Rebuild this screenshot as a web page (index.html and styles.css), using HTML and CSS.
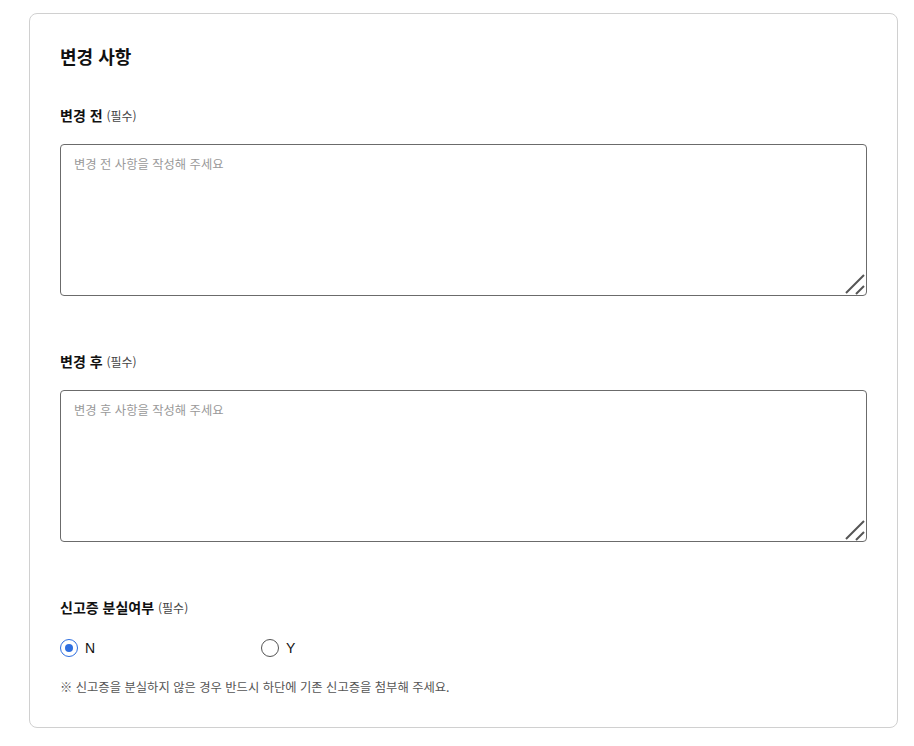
FILE: index.html
```html
<!DOCTYPE html>
<html lang="ko">
<head>
  <meta charset="UTF-8" />
  <meta name="viewport" content="width=device-width, initial-scale=1.0">
  <title>변경 사항</title>
  <link rel="stylesheet" href="styles.css">
</head>
<body>
  <section class="change-card">
    <h2 class="card-title">변경 사항</h2>

    <div class="field">
      <label class="field-label" for="beforeInput">변경 전 <span class="req">(필수)</span></label>
      <div class="text-wrap">
        <textarea id="beforeInput" class="field-text" placeholder="변경 전 사항을 작성해 주세요"></textarea>
        <svg class="grip" width="22" height="22" viewBox="0 0 22 22"><path d="M1 19L19 1M11 20L19 12" /></svg>
      </div>
    </div>

    <div class="field">
      <label class="field-label" for="afterInput">변경 후 <span class="req">(필수)</span></label>
      <div class="text-wrap">
        <textarea id="afterInput" class="field-text" placeholder="변경 후 사항을 작성해 주세요"></textarea>
        <svg class="grip" width="22" height="22" viewBox="0 0 22 22"><path d="M1 19L19 1M11 20L19 12" /></svg>
      </div>
    </div>

    <div class="field field-last">
      <div class="field-label">신고증 분실여부 <span class="req">(필수)</span></div>
      <div class="radio-row">
        <label class="radio-item">
          <input type="radio" name="lost" value="N" checked>
          <span class="radio-mark"></span>
          <span class="radio-text">N</span>
        </label>
        <label class="radio-item">
          <input type="radio" name="lost" value="Y">
          <span class="radio-mark"></span>
          <span class="radio-text">Y</span>
        </label>
      </div>
      <p class="note">※ 신고증을 분실하지 않은 경우 반드시 하단에 기존 신고증을 첨부해 주세요.</p>
    </div>
  </section>
</body>
</html>
```

FILE: styles.css
```css
:root {
  --text-color: #111;
  --muted-color: #555;
  --line-color: #d0d0d0;
  --input-border: #6b6b6b;
  --blue: #2f6fe0;
}
html, body {
  margin: 0;
  padding: 0;
  background: #fff;
  color: var(--text-color);
  font-family: "Noto Sans CJK KR", "Noto Sans", sans-serif;
}
body {
  padding: 13px 15px 18px 29px;
}
.change-card {
  border: 1px solid var(--line-color);
  border-radius: 8px;
  padding: 29px 30px 31px 30px;
  max-width: 807px;
}
.card-title {
  margin: 0;
  font-size: 18px;
  font-weight: 700;
  line-height: 26px;
}
.field {
  margin-top: 36px;
}
.field + .field {
  margin-top: 55px;
}
.field-label {
  display: block;
  font-size: 14px;
  font-weight: 700;
  line-height: 20px;
  margin-bottom: 19px;
}
.req {
  font-weight: 400;
  font-size: 12px;
  line-height: 1;
  color: #444;
}
.text-wrap {
  position: relative;
}
.field-text {
  display: block;
  box-sizing: border-box;
  width: 100%;
  height: 152px;
  border: 1px solid var(--input-border);
  border-radius: 4px;
  padding: 10px 13px;
  font-family: inherit;
  font-size: 12.3px;
  line-height: 18px;
  color: var(--text-color);
  resize: none;
  outline: none;
}
.field-text::placeholder {
  color: #999;
}
.grip {
  position: absolute;
  right: 0;
  bottom: 0;
  pointer-events: none;
}
.grip path {
  stroke: #555;
  stroke-width: 2;
  fill: none;
}
.field-last .field-label {
  margin-bottom: 18px;
}
.radio-row {
  display: flex;
  height: 26px;
  align-items: center;
}
.radio-item {
  display: flex;
  align-items: center;
  width: 201px;
  cursor: pointer;
  font-family: "Liberation Sans", "Noto Sans CJK KR", sans-serif;
  font-size: 14px;
}
.radio-item input {
  display: none;
}
.radio-mark {
  width: 18px;
  height: 18px;
  box-sizing: border-box;
  border: 1px solid #555;
  border-radius: 50%;
  margin-right: 7px;
  display: flex;
  align-items: center;
  justify-content: center;
}
.radio-item input:checked + .radio-mark {
  border: 1.5px solid var(--blue);
}
.radio-item input:checked + .radio-mark::after {
  content: "";
  width: 8px;
  height: 8px;
  border-radius: 50%;
  background: var(--blue);
}
.note {
  margin: 17px 0 0;
  font-size: 12.3px;
  line-height: 18px;
  color: var(--muted-color);
}
```
